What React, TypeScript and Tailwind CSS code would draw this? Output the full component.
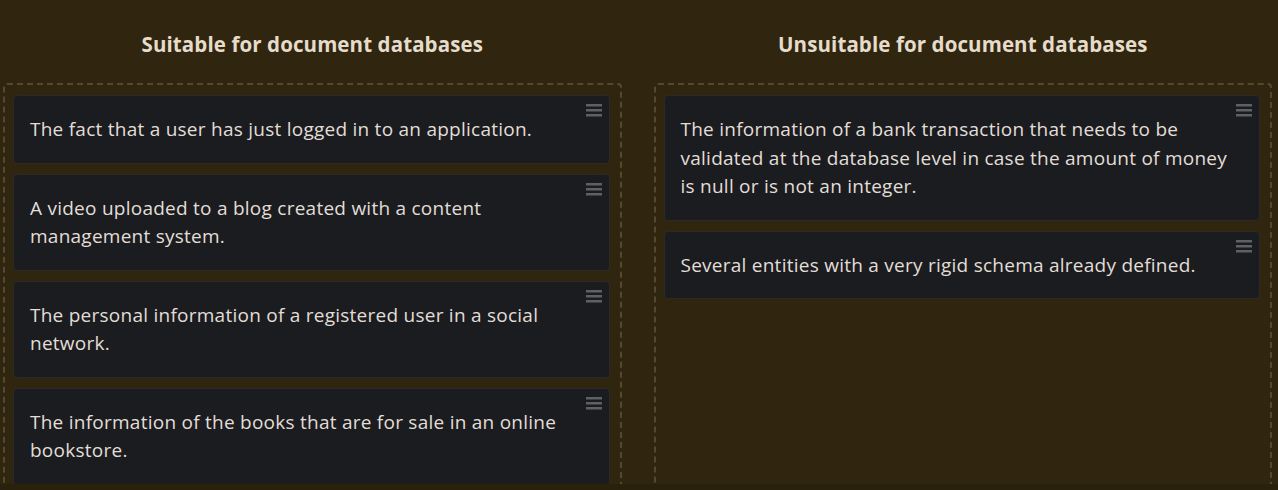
const suitable = [
  "The fact that a user has just logged in to an application.",
  "A video uploaded to a blog created with a content management system.",
  "The personal information of a registered user in a social network.",
  "The information of the books that are for sale in an online bookstore.",
];

const unsuitable = [
  "The information of a bank transaction that needs to be validated at the database level in case the amount of money is null or is not an integer.",
  "Several entities with a very rigid schema already defined.",
];

function Handle() {
  return (
    <svg width="16" height="14" viewBox="0 0 16 14" className="absolute right-[7px] top-[7px]">
      <rect x="0" y="1" width="16" height="2.5" fill="#5f6063" />
      <rect x="0" y="6" width="16" height="2.5" fill="#5f6063" />
      <rect x="0" y="11" width="16" height="2.5" fill="#5f6063" />
    </svg>
  );
}

function Card({ text }: { text: string }) {
  return (
    <div className="relative shrink-0 rounded-[4px] border border-[#2b2a27] bg-[#1b1c1f] py-[19px] pl-4 pr-[28px] text-[19px] leading-[28.5px] tracking-[0.25px] text-[#e2ded7]">
      <Handle />
      {text}
    </div>
  );
}

function Column({ title, items }: { title: string; items: string[] }) {
  return (
    <div className="flex min-h-0 flex-col">
      <h2 className="flex h-[83px] shrink-0 items-center justify-center pt-[6px] text-[20.5px] font-bold tracking-[0.1px] text-[#e6dccb]">
        {title}
      </h2>
      <div className="flex min-h-0 flex-1 flex-col gap-[10px] overflow-hidden rounded-t-[4px] border-2 border-b-0 border-dashed border-[#54482f] pl-[8px] pr-[10px] pt-[10px]">
        {items.map((t) => (
          <Card key={t} text={t} />
        ))}
      </div>
    </div>
  );
}

export default function App() {
  return (
    <div className="flex h-[490px] w-full flex-col overflow-hidden bg-[#2a210d] font-['Open_Sans','Noto_Sans',sans-serif]">
      <div className="grid h-[484px] shrink-0 grid-cols-2 gap-8 bg-[#30260f] pl-[3px] pr-[6px]">
        <Column title="Suitable for document databases" items={suitable} />
        <Column title="Unsuitable for document databases" items={unsuitable} />
      </div>
    </div>
  );
}
